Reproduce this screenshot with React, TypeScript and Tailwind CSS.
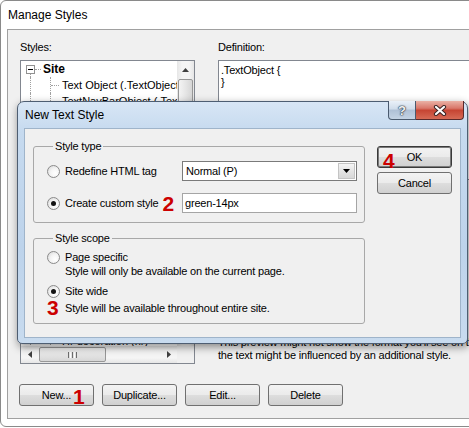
import type { ReactNode } from 'react'

function Radio({ checked }: { checked?: boolean }) {
  return (
    <span className="w-[13px] h-[13px] rounded-full border border-[#8a8a8a] bg-[radial-gradient(circle_at_65%_65%,#ffffff_0%,#f4f4f4_45%,#d4d4d4_100%)] flex items-center justify-center">
      {checked && <span className="w-[5px] h-[5px] rounded-full bg-[#141414]" />}
    </span>
  )
}

function Btn({ children, focused }: { children: ReactNode; focused?: boolean }) {
  return (
    <div
      className={`relative w-[75px] h-[22px] rounded-[3px] border ${
        focused ? 'border-[#3a3a3a] shadow-[inset_0_0_0_1px_#7a7a7a]' : 'border-[#707070]'
      } bg-[linear-gradient(#f3f3f3_0%,#ebebeb_48%,#dddddd_52%,#d0d0d0_100%)] flex items-center justify-center`}
    >
      {children}
    </div>
  )
}

function Num({ children, className = '' }: { children: ReactNode; className?: string }) {
  return (
    <span className={`font-bold text-[21px] leading-none tracking-normal text-[#cc0000] ${className}`}>
      {children}
    </span>
  )
}

const arrow = 'fill-[#404040]'

function VScroll() {
  return (
    <div className="w-[17px] h-full bg-[linear-gradient(to_right,#e6e6e6,#f5f5f5_30%,#f5f5f5_70%,#e6e6e6)] flex flex-col">
      <div className="h-[17px] flex items-center justify-center">
        <svg width="7" height="4" viewBox="0 0 7 4">
          <polygon points="0,4 3.5,0 7,4" className={arrow} />
        </svg>
      </div>
      <div className="mt-px mx-px h-[220px] rounded-[2px] border border-[#979797] bg-[linear-gradient(to_right,#f4f4f4,#e6e6e6_50%,#d6d6d6)]" />
    </div>
  )
}

function HScroll() {
  return (
    <div className="flex-1 h-full bg-[linear-gradient(#e6e6e6,#f5f5f5_30%,#f5f5f5_70%,#e6e6e6)] flex items-center">
      <div className="w-[17px] h-full flex items-center justify-center">
        <svg width="4" height="7" viewBox="0 0 4 7">
          <polygon points="4,0 0,3.5 4,7" className={arrow} />
        </svg>
      </div>
      <div className="ml-px w-[67px] h-[15px] rounded-[2px] border border-[#979797] bg-[linear-gradient(#f4f4f4,#e6e6e6_50%,#d6d6d6)] flex items-center justify-center gap-[1px]">
        <span className="w-px h-[6px] bg-[#6e6e6e]" />
        <span className="w-px h-[6px] bg-[#ffffff]" />
        <span className="w-px h-[6px] bg-[#6e6e6e]" />
        <span className="w-px h-[6px] bg-[#ffffff]" />
        <span className="w-px h-[6px] bg-[#6e6e6e]" />
      </div>
      <div className="flex-1" />
      <div className="w-[17px] h-full flex items-center justify-center">
        <svg width="4" height="7" viewBox="0 0 4 7">
          <polygon points="0,0 4,3.5 0,7" className={arrow} />
        </svg>
      </div>
    </div>
  )
}

const children = [
  'Text Object (.TextObject)',
  'TextNavBarObject (.TextNavBarObject)',
  'Image Object (.ImageObject)',
  'Heading 1 (h1)',
  'Heading 2 (h2)',
  'Heading 3 (h3)',
  'Paragraph (p)',
  'Link (a)',
  'Visited link (a:visited)',
  'Hover link (a:hover)',
  'Active link (a:active)',
  'Table (table)',
  'List item (li)',
  'Bold (strong)',
  'Italic (em)',
  'Quote (blockquote)',
  'Hr decoration (hr)',
  'Footer (.Footer)',
]

function Tree() {
  return (
    <div className="w-[175px] h-[304px] border border-[#828790] bg-white flex flex-col">
      <div className="flex h-[285px]">
        <div className="flex-1 overflow-hidden tracking-normal">
          <div className="h-[16px] flex">
            <div className="ml-[5px] w-[9px] h-[16px] flex flex-col">
              <div className="h-[4px]" />
              <div className="h-[9px] border border-[#919191] bg-white flex items-center justify-center">
                <div className="w-[5px] h-px bg-black" />
              </div>
              <div className="flex-1 ml-[4px] border-l border-dotted border-[#a0a0a0]" />
            </div>
            <div className="self-center w-[6px] border-t border-dotted border-[#a0a0a0]" />
            <span className="ml-[2px] font-bold text-[12px] leading-[16px]">Site</span>
          </div>
          {children.map((c) => (
            <div key={c} className="h-[16px] flex">
              <div className="ml-[9px] w-[20px] shrink-0 border-l border-dotted border-[#a0a0a0]" />
              <div className="w-[12px] shrink-0 border-l border-dotted border-[#a0a0a0] flex items-center">
                <div className="w-[8px] border-t border-dotted border-[#a0a0a0]" />
              </div>
              <span className="whitespace-nowrap leading-[16px]">{c}</span>
            </div>
          ))}
        </div>
        <VScroll />
      </div>
      <div className="flex h-[17px]">
        <HScroll />
        <div className="w-[17px] bg-[#f0f0f0]" />
      </div>
    </div>
  )
}

function NewTextStyle() {
  return (
    <div className="absolute left-[17px] top-[101px] w-[451px] h-[243px] rounded-t-[7px] rounded-b-[5px] border border-[#4e5e72] bg-[linear-gradient(#d8e6f5,#c6daef_12%,#bdd3eb_60%,#c8dbef)] shadow-[1px_3px_8px_rgba(0,0,0,0.45)] flex flex-col">
      {/* caption */}
      <div className="h-[26px] flex">
        <div className="flex-1 pl-[7px] pt-[6px] text-[12px] leading-[15px] tracking-normal">New Text Style</div>
        <div className="flex mr-[3px] h-[19px] -mt-px">
          <div className="w-[28px] h-full border border-t-0 border-[#4a5a6e] rounded-bl-[4px] bg-[linear-gradient(#e9f0f8,#cfdcea_45%,#aec0d6_50%,#c4d3e4)] flex items-center justify-center">
            <span className="font-bold text-[13px] leading-none text-[#f2f2f2] tracking-normal [text-shadow:0_0_1px_#27374a,0_0_1px_#27374a,0_0_2px_#27374a]">?</span>
          </div>
          <div className="w-[48px] h-full border border-t-0 border-l-0 border-[#5a2a2a] rounded-br-[4px] bg-[linear-gradient(#eab1a5,#d9776a_40%,#c64533_52%,#d66a55)] flex items-center justify-center">
            <svg width="14" height="11" viewBox="0 0 14 11">
              <path d="M3 2 L11 9 M11 2 L3 9" stroke="#3a2424" strokeWidth="4.2" strokeLinecap="round" />
              <path d="M3 2 L11 9 M11 2 L3 9" stroke="#ffffff" strokeWidth="2.2" strokeLinecap="round" />
            </svg>
          </div>
        </div>
      </div>
      {/* client */}
      <div className="mx-[6px] mb-[5px] flex-1 border border-[#9fb4ca] bg-[#f0f0f0] flex pl-[8px] pt-[17px]">
        <div className="w-[332px] flex flex-col">
          <div className="border border-[#a8a8a8] rounded-[3px] pl-[13px] pb-[9px]">
            <div className="-mt-[7px] ml-[6px] px-[2px] w-fit bg-[#f0f0f0] leading-[13px]">Style type</div>
            <div className="mt-[8px] h-[20px] flex items-center">
              <div className="w-[18px]"><Radio /></div>
              <div className="w-[117px]">Redefine HTML tag</div>
              <div className="w-[175px] h-[20px] border border-[#7a7a7a] bg-white flex">
                <div className="flex-1 pl-[3px] flex items-center">Normal (P)</div>
                <div className="w-[17px] m-px border border-[#c4c4c4] bg-[linear-gradient(#f6f6f6,#e4e4e4_50%,#d8d8d8)] flex items-center justify-center">
                  <svg width="7" height="4" viewBox="0 0 7 4">
                    <polygon points="0,0 7,0 3.5,4" className="fill-black" />
                  </svg>
                </div>
              </div>
            </div>
            <div className="mt-[12px] h-[20px] flex items-center">
              <div className="w-[18px]"><Radio checked /></div>
              <div className="w-[117px] flex items-center">
                <span>Create custom style</span>
                <Num className="ml-[4px]">2</Num>
              </div>
              <div className="w-[175px] h-[20px] border border-[#a5a5a5] bg-white pl-[2px] flex items-center">green-14px</div>
            </div>
          </div>
          <div className="mt-[15px] border border-[#a8a8a8] rounded-[3px] pl-[13px] pb-[8px]">
            <div className="-mt-[7px] ml-[6px] px-[2px] w-fit bg-[#f0f0f0] leading-[13px]">Style scope</div>
            <div className="mt-[5px] h-[14px] flex items-center">
              <div className="w-[18px]"><Radio /></div>
              <span>Page specific</span>
            </div>
            <div className="h-[14px] flex items-center">
              <div className="w-[18px]" />
              <span>Style will only be available on the current page.</span>
            </div>
            <div className="mt-[6px] h-[14px] flex items-center">
              <div className="w-[18px]"><Radio checked /></div>
              <span>Site wide</span>
            </div>
            <div className="mt-[3px] h-[14px] flex items-center">
              <div className="w-[18px]"><Num>3</Num></div>
              <span>Style will be available throughout entire site.</span>
            </div>
          </div>
        </div>
        <div className="ml-[12px] flex flex-col gap-[4px]">
          <Btn focused>
            <Num className="absolute left-[5px] top-[3px]">4</Num>
            <span>OK</span>
          </Btn>
          <Btn>Cancel</Btn>
        </div>
      </div>
    </div>
  )
}

export default function App() {
  return (
    <div className="relative w-[469px] h-[428px] overflow-hidden bg-white font-['Liberation_Sans',Arial,sans-serif] text-[11px] text-black tracking-[-0.2px]">
      <div className="w-[520px] h-[427px] rounded-[6px] border border-[#8a8a8a] bg-white flex flex-col">
        <div className="h-[28px] pl-[7px] flex items-center text-[12px] tracking-normal">Manage Styles</div>
        <div className="ml-[6px] h-[390px] border-t border-l border-b border-[#a0a0a0] bg-[#f0f0f0] pt-[11px] pl-[12px] flex flex-col">
          <div className="flex gap-[23px]">
            <div className="w-[175px]">
              <div className="leading-[13px]">Styles:</div>
              <div className="mt-[6px]">
                <Tree />
              </div>
            </div>
            <div className="w-[300px]">
              <div className="leading-[13px]">Definition:</div>
              <div className="mt-[6px] h-[120px] border border-[#828790] bg-white pl-[2px] pt-[3px] leading-[12px]">
                <div>.TextObject {'{'}</div>
                <div>{'}'}</div>
              </div>
              <div className="mt-[156px] leading-[13px] whitespace-nowrap">
                <div>This preview might not show the format you'll see on the</div>
                <div>the text might be influenced by an additional style.</div>
              </div>
            </div>
          </div>
          <div className="-ml-px mt-[20px] flex gap-[8px]">
            <Btn>
              <span>New...</span>
              <Num className="absolute left-[53px] top-[1px]">1</Num>
            </Btn>
            <Btn>Duplicate...</Btn>
            <Btn>Edit...</Btn>
            <Btn>Delete</Btn>
          </div>
        </div>
      </div>
      <NewTextStyle />
    </div>
  )
}
